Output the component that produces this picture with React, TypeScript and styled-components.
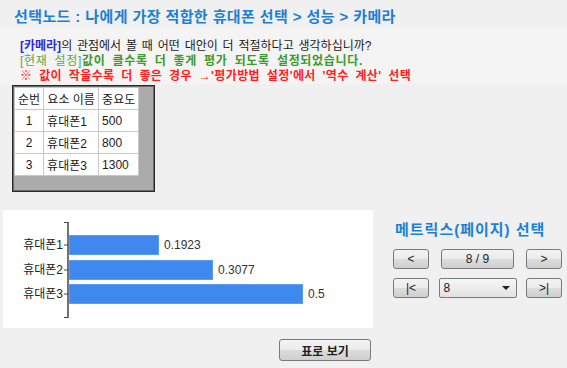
import styled, { createGlobalStyle } from 'styled-components';

const rows = [
  { no: 1, name: '휴대폰1', weight: '500' },
  { no: 2, name: '휴대폰2', weight: '800' },
  { no: 3, name: '휴대폰3', weight: '1300' },
];

const scores = [
  { name: '휴대폰1', value: 0.1923 },
  { name: '휴대폰2', value: 0.3077 },
  { name: '휴대폰3', value: 0.5 },
];

const GlobalStyle = createGlobalStyle`
  html, body {
    margin: 0;
    padding: 0;
    background: #f0f0f0;
  }
  body {
    width: 567px;
    height: 368px;
    overflow: hidden;
    font-family: "Liberation Sans", "Noto Sans CJK KR", sans-serif;
    color: #1a1a1a;
  }
`;

const ScoreChart = () => {
  const axisX = 65;
  const scale = 468;
  const barTops = [25, 50, 74];
  return (
    <svg width="370" height="118" viewBox="0 0 370 118">
      <line x1={axisX} y1={12} x2={axisX} y2={108} stroke="#444" strokeWidth="1.5" />
      <line x1={axisX - 4} y1={12.5} x2={axisX} y2={12.5} stroke="#444" strokeWidth="1" />
      <line x1={axisX - 4} y1={107.5} x2={axisX} y2={107.5} stroke="#444" strokeWidth="1" />
      {scores.map((s, i) => {
        const top = barTops[i];
        const w = Math.round(s.value * scale);
        const cy = top + 10;
        return (
          <g key={s.name}>
            <line x1={axisX - 4} y1={cy} x2={axisX} y2={cy} stroke="#444" strokeWidth="1" />
            <rect x={axisX + 1.5} y={top + 0.5} width={w - 1} height={19} fill="#3f89ee" stroke="#5c9cf2" strokeWidth="1" />
            <text x={axisX - 5} y={cy + 4} textAnchor="end" fontSize="12" fill="#222">
              {s.name}
            </text>
            <text x={axisX + w + 6} y={cy + 4} fontSize="12" fill="#333">
              {s.value}
            </text>
          </g>
        );
      })}
    </svg>
  );
};

export default function App() {
  return (
    <>
      <GlobalStyle />
      <Page>
        <Title>선택노드 : 나에게 가장 적합한 휴대폰 선택 &gt; 성능 &gt; 카메라</Title>
        <InfoBand>
          <Line $word={1.5}>
            <Criterion>[카메라]</Criterion>의 관점에서 볼 때 어떤 대안이 더 적절하다고 생각하십니까?
          </Line>
          <Line $color="#3b9a2a" $bold $letter={0.7} $word={3}>
            <Setting>[현재 설정]</Setting>값이 클수록 더 좋게 평가 되도록 설정되었습니다.
          </Line>
          <Line $color="#ff1e1e" $bold $letter={0.4} $word={3}>
            ※ 값이 작을수록 더 좋은 경우 →'평가방법 설정'에서 '역수 계산' 선택
          </Line>
        </InfoBand>

        <Grid>
          <GridTable>
            <thead>
              <tr>
                <HeadCell>순번</HeadCell>
                <HeadCell>요소 이름</HeadCell>
                <HeadCell>중요도</HeadCell>
              </tr>
            </thead>
            <tbody>
              {rows.map((r) => (
                <tr key={r.no}>
                  <Cell $center>{r.no}</Cell>
                  <Cell>{r.name}</Cell>
                  <Cell>{r.weight}</Cell>
                </tr>
              ))}
            </tbody>
          </GridTable>
        </Grid>

        <ChartRow>
          <ChartPanel>
            <ScoreChart />
          </ChartPanel>
          <Pager>
            <PagerTitle>메트릭스(페이지) 선택</PagerTitle>
            <PagerRow>
              <NavButton>&lt;</NavButton>
              <PageButton>8 / 9</PageButton>
              <NavButton>&gt;</NavButton>
            </PagerRow>
            <PagerRow>
              <NavButton>|&lt;</NavButton>
              <Select>
                <span>8</span>
                <Arrow />
              </Select>
              <NavButton>&gt;|</NavButton>
            </PagerRow>
          </Pager>
        </ChartRow>

        <Footer>
          <TableButton>표로 보기</TableButton>
        </Footer>
      </Page>
    </>
  );
}

const Page = styled.div`
  display: flex;
  flex-direction: column;
  width: 567px;
  height: 368px;
`;

const Title = styled.h1`
  margin: 0;
  height: 28px;
  padding: 5px 0 0 14px;
  box-sizing: border-box;
  font-size: 15px;
  font-weight: bold;
  color: #1c80d2;
  white-space: nowrap;
  letter-spacing: 0.4px;
`;

const InfoBand = styled.div`
  height: 56px;
  padding: 11px 0 0 20px;
  box-sizing: border-box;
  background: #f4f4f4;
`;

const Line = styled.div<{ $color?: string; $bold?: boolean; $letter?: number; $word?: number }>`
  font-size: 12px;
  line-height: 15px;
  white-space: nowrap;
  color: ${(p) => p.$color ?? '#1a1a1a'};
  font-weight: ${(p) => (p.$bold ? 'bold' : 'normal')};
  letter-spacing: ${(p) => p.$letter ?? 0}px;
  word-spacing: ${(p) => p.$word ?? 0}px;
`;

const Criterion = styled.span`
  color: #2c2cd0;
  font-weight: bold;
`;

const Setting = styled.span`
  color: #52a858;
  font-weight: normal;
`;

const Grid = styled.div`
  margin: 1px 0 0 12px;
  width: 143px;
  height: 107px;
  box-sizing: border-box;
  border: 1px solid #2a2a2a;
  box-shadow: inset 1px 1px 0 #6a6a6a, inset -1px -1px 0 #6a6a6a;
  background: #ababab;
  padding: 1px;
`;

const GridTable = styled.table`
  border-collapse: collapse;
  background: #fff;
  font-size: 12px;
`;

const HeadCell = styled.th`
  height: 21px;
  padding: 0 3px;
  font-weight: normal;
  border: 1px solid #c8c8c8;
  text-align: center;
  white-space: nowrap;
  &:nth-child(1) { width: 21px; }
  &:nth-child(2) { width: 48px; }
  &:nth-child(3) { width: 33px; }
`;

const Cell = styled.td<{ $center?: boolean }>`
  height: 21px;
  padding: 0 3px;
  border: 1px solid #c8c8c8;
  text-align: ${(p) => (p.$center ? 'center' : 'left')};
  white-space: nowrap;
`;

const ChartRow = styled.div`
  display: flex;
  margin-top: 18px;
`;

const ChartPanel = styled.div`
  margin-left: 3px;
  width: 370px;
  height: 118px;
  background: #fff;
`;

const Pager = styled.div`
  display: flex;
  flex-direction: column;
  margin-left: 20px;
  width: 169px;
`;

const PagerTitle = styled.div`
  height: 30px;
  padding: 8px 0 0 2px;
  box-sizing: border-box;
  font-size: 15px;
  font-weight: bold;
  color: #1c80d2;
  white-space: nowrap;
  letter-spacing: 1px;
`;

const PagerRow = styled.div`
  display: flex;
  align-items: center;
  justify-content: space-between;
  margin-top: 9px;
  height: 20px;
`;

const buttonLook = `
  box-sizing: border-box;
  height: 20px;
  border: 1px solid #7a7a7a;
  border-radius: 3px;
  background: linear-gradient(#f3f3f3 0%, #ebebeb 50%, #dddddd 51%, #cfcfcf 100%);
  font-family: "Liberation Sans", "Noto Sans CJK KR", sans-serif;
  font-size: 12px;
  color: #222;
  padding: 0;
`;

const NavButton = styled.button`
  ${buttonLook}
  width: 36px;
`;

const PageButton = styled.button`
  ${buttonLook}
  width: 73px;
`;

const Select = styled.div`
  box-sizing: border-box;
  display: flex;
  align-items: center;
  justify-content: space-between;
  width: 78px;
  height: 20px;
  padding: 0 6px 0 4px;
  border: 1px solid #7a7a7a;
  border-radius: 2px;
  background: linear-gradient(#f6f6f6, #e2e2e2);
  font-size: 12px;
  color: #222;
`;

const Arrow = styled.span`
  width: 0;
  height: 0;
  border-left: 4px solid transparent;
  border-right: 4px solid transparent;
  border-top: 4px solid #222;
`;

const Footer = styled.div`
  margin: 11px 0 0 279px;
`;

const TableButton = styled.button`
  ${buttonLook}
  width: 92px;
  height: 22px;
  font-weight: bold;
`;
